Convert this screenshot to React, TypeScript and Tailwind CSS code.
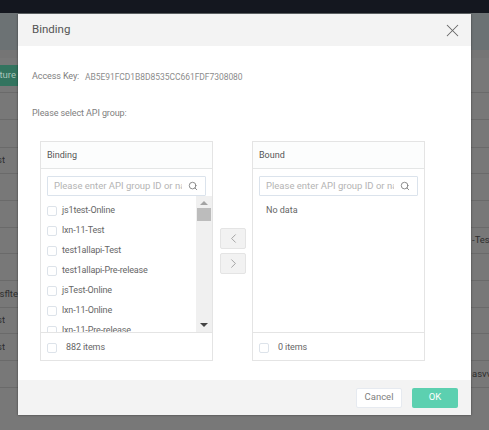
import React from 'react';
import { ChevronLeft, ChevronRight, Search, X } from 'lucide-react';

const ROWS = [
  { h: 'h-[35px]', left: '', right: '', button: true },
  { h: 'h-[27px]', left: '', right: '' },
  { h: 'h-[28px]', left: '', right: '' },
  { h: 'h-[26px]', left: 'st', right: '' },
  { h: 'h-[27px]', left: '', right: '' },
  { h: 'h-[27px]', left: '', right: '' },
  { h: 'h-[26px]', left: '', right: '-Test' },
  { h: 'h-[27px]', left: '', right: '' },
  { h: 'h-[27px]', left: 'osflte', right: '', wide: true },
  { h: 'h-[26px]', left: 'st', right: '' },
  { h: 'h-[27px]', left: 'st', right: '' },
  { h: 'h-[27px]', left: '', right: 'asvv' },
];

const ITEMS = [
  'js1test-Online',
  'lxn-11-Test',
  'test1allapi-Test',
  'test1allapi-Pre-release',
  'jsTest-Online',
  'lxn-11-Online',
  'lxn-11-Pre-release',
];

const Checkbox: React.FC = () => (
  <span className="block w-[10px] h-[10px] shrink-0 bg-white border border-[#dde3ea] rounded-[2px]" />
);

const SearchBox: React.FC = () => (
  <div className="flex items-center h-[20px] mx-[6px] pl-[6px] pr-[7px] border border-[#dbe3ec] rounded-[1px] bg-white">
    <span className="w-[128px] overflow-hidden whitespace-nowrap text-[9.5px] text-[#b4b4b4]">
      Please enter API group ID or na
    </span>
    <Search size={10} strokeWidth={2} className="ml-auto text-[#777]" />
  </div>
);

const Panel: React.FC<{ title: string; footer: string; children: React.ReactNode }> = ({
  title,
  footer,
  children,
}) => (
  <div className="flex flex-col w-[173px] h-[220px] border border-[#e4e4e4] bg-white">
    <div className="flex items-center h-[27px] pt-[2px] pl-[6px] shrink-0 bg-[#fcfdfd] border-b border-[#e4e6e6] text-[9px] text-[#555]">
      {title}
    </div>
    <div className="flex-1 min-h-0 overflow-hidden pt-[7px]">{children}</div>
    <div className="flex items-center h-[28px] shrink-0 pt-[2px] pl-[6px] gap-[9px] border-t border-[#e4e4e4] text-[9px] tracking-[-0.1px] text-[#666]">
      <Checkbox />
      <span>{footer}</span>
    </div>
  </div>
);

export default function App() {
  return (
    <div className="relative w-[489px] h-[430px] overflow-hidden bg-[#787878] text-[#777] font-['Roboto',sans-serif]">
      <div className="h-[13px] bg-[#14171f]" />
      <div className="h-[37px] bg-[#6c7274]" />
      <div className="h-[8px] bg-[#757575]" />
      {ROWS.map((row, index) => (
        <div
          key={index}
          className={`flex items-center justify-between ${row.h} border-b border-[#6a6a6a] text-[9.5px] text-[#2e2e2e]`}
        >
          {row.button ? (
            <span className="flex items-center justify-end w-[18px] h-[21px] pr-[2px] bg-[#33745f] text-[#a9c4bb] overflow-hidden">
              ture
            </span>
          ) : (
            <span className={`${row.wide ? 'w-[18px]' : 'w-[5px]'} flex justify-end overflow-hidden`}>{row.left}</span>
          )}
          <span className="w-[17px] overflow-hidden whitespace-nowrap">{row.right}</span>
        </div>
      ))}

      <div className="absolute left-[18px] top-[14px] flex flex-col w-[453px] h-[401px] bg-white shadow-[0_0_2px_rgba(0,0,0,0.5)]">
        <div className="flex items-center justify-between h-[32px] pl-[14px] pr-[8px] shrink-0 bg-[#f3f3f3]">
          <span className="text-[11.5px] text-[#555]">Binding</span>
          <X size={21} strokeWidth={1.2} className="text-[#666]" />
        </div>

        <div className="flex-1 pt-[24px] pl-[14px]">
          <div className="flex h-[14px] items-center text-[9px] tracking-[-0.1px] text-[#808080] whitespace-nowrap">
            <span className="w-[53px] shrink-0">Access Key:</span>
            <span className="text-[8.5px] tracking-[-0.05px] text-[#8c8c8c]">AB5E91FCD1B8D8535CC661FDF7308080</span>
          </div>
          <div className="flex h-[14px] items-center mt-[23px] text-[9px] tracking-[-0.1px] text-[#808080]">Please select API group:</div>

          <div className="flex items-start mt-[20px] ml-[8px]">
            <Panel title="Binding" footer="882 items">
              <div className="flex-1 min-w-0 overflow-hidden">
                <SearchBox />
                <div className="flex flex-col mt-[5px]">
                  {ITEMS.map((item) => (
                    <div key={item} className="flex items-center h-[20px] shrink-0 pl-[6px] gap-[5px] text-[9px] tracking-[-0.15px] text-[#666] whitespace-nowrap">
                      <Checkbox />
                      <span>{item}</span>
                    </div>
                  ))}
                </div>
              </div>
            </Panel>

            <div className="flex flex-col gap-[4px] mt-[87px] ml-[7px] mr-[6px]">
              <div className="flex items-center justify-center w-[26px] h-[21px] bg-[#f2f2f2] border border-[#e4e4e4] rounded-[2px] text-[#8a8a8a]">
                <ChevronLeft size={15} strokeWidth={1.2} />
              </div>
              <div className="flex items-center justify-center w-[26px] h-[21px] bg-[#f2f2f2] border border-[#e4e4e4] rounded-[2px] text-[#8a8a8a]">
                <ChevronRight size={15} strokeWidth={1.2} />
              </div>
            </div>

            <Panel title="Bound" footer="0 items">
              <SearchBox />
              <div className="pl-[13px] pt-[8px] text-[9px] text-[#666]">No data</div>
            </Panel>
          </div>
        </div>

        <div className="flex items-center justify-end gap-[10px] h-[35px] pr-[13px] shrink-0 bg-[#f3f3f3]">
          <div className="flex items-center justify-center w-[46px] h-[20px] bg-white border border-[#e6eaf0] rounded-[2px] text-[9.5px] text-[#808080]">
            Cancel
          </div>
          <div className="flex items-center justify-center w-[46px] h-[20px] bg-[#5cd0b0] rounded-[2px] text-[9.5px] text-white">
            OK
          </div>
        </div>

        {/* scrollbar lies over the list */}
        <div className="absolute left-[178px] top-[182px] flex flex-col items-center w-[16px] h-[136px] bg-[#f0f0f0]">
          <span className="mt-[5px] w-0 h-0 border-x-[4px] border-x-transparent border-b-[4px] border-b-[#a3a3a3]" />
          <span className="mt-[3px] w-[14px] h-[13px] bg-[#bcbcbc]" />
          <span className="mt-auto mb-[5px] w-0 h-0 border-x-[4px] border-x-transparent border-t-[4px] border-t-[#444]" />
        </div>
      </div>
    </div>
  );
}
